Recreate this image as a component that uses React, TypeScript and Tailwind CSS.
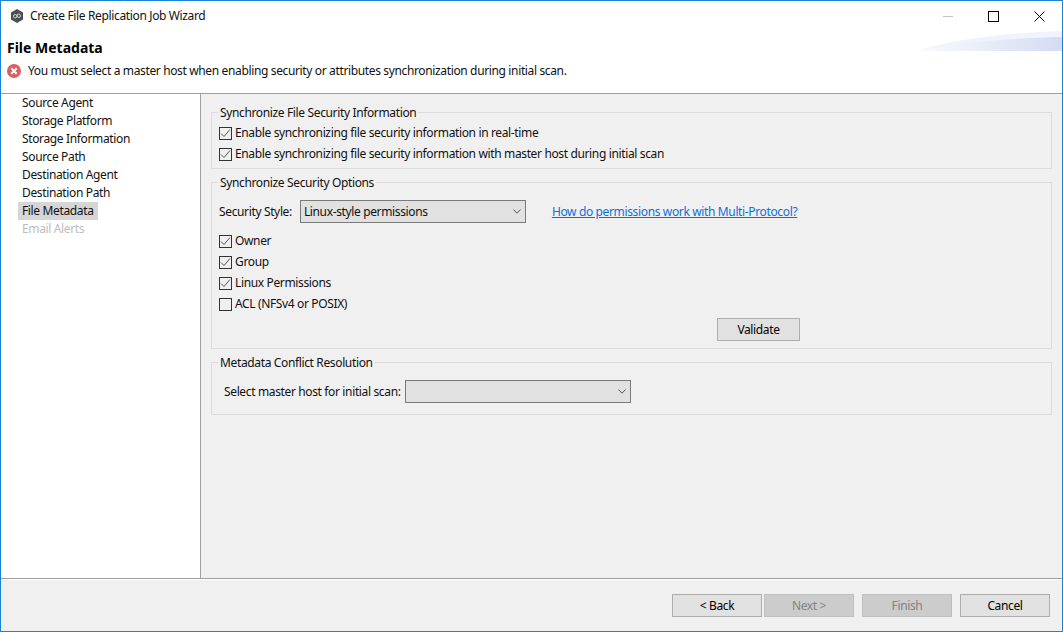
const steps = [
  "Source Agent",
  "Storage Platform",
  "Storage Information",
  "Source Path",
  "Destination Agent",
  "Destination Path",
];

function Check({ label, checked = true }: { label: string; checked?: boolean }) {
  return (
    <label className="flex h-4.5 items-center gap-0.75">
      <span className="flex size-3.25 shrink-0 items-center justify-center border border-[#333] bg-[#f0f0f0]">
        {checked && (
          <svg viewBox="0 0 11 11" className="size-2.75" fill="none" stroke="#555" strokeWidth="1">
            <path d="M1 5.5 L4 8.5 L10 1.5" />
          </svg>
        )}
      </span>
      <span>{label}</span>
    </label>
  );
}

function Group({ title, children, className }: { title: string; children: React.ReactNode; className?: string }) {
  return (
    <fieldset className={`border border-[#dcdcdc] pl-1.5 pr-2 ${className}`}>
      <legend className="px-0.5 pt-0.5 leading-4.5">{title}</legend>
      <div className="ml-px">{children}</div>
    </fieldset>
  );
}

function Select({ value, className }: { value?: string; className?: string }) {
  return (
    <div className={`flex h-5.75 items-center justify-between border border-[#7a7a7a] bg-[#e1e1e1] pl-0.75 pr-1 ${className}`}>
      <span>{value}</span>
      <svg viewBox="0 0 8 5" className="h-1.25 w-2" fill="none" stroke="#555" strokeWidth="1">
        <path d="M0.4 0.5 L4 4.2 L7.6 0.5" />
      </svg>
    </div>
  );
}

function WizardButton({ label, disabled = false, className }: { label: string; disabled?: boolean; className?: string }) {
  return (
    <button
      className={`flex h-5.75 items-center justify-center border ${
        disabled ? "border-[#bfbfbf] bg-[#cccccc] text-[#838383]" : "border-[#adadad] bg-[#e1e1e1] text-black"
      } ${className}`}
    >
      {label}
    </button>
  );
}

export default function App() {
  return (
    <div
      className="flex h-screen flex-col border border-[#1883d7] bg-[#f0f0f0] text-xs tracking-[-0.03em] text-[#111]"
      style={{ fontFamily: '"Noto Sans", "Liberation Sans", sans-serif' }}
    >
      <header className="relative flex h-23.25 shrink-0 flex-col border-b border-[#a0a0a0] bg-white">
        <div className="flex h-7.5 items-center pl-2.25">
          <svg viewBox="0 0 14 14" className="size-3.5">
            <path d="M7 0 L13 3.5 V10.5 L7 14 L1 10.5 V3.5 Z" fill="#4a4f55" />
            <circle cx="5.2" cy="7.2" r="1.7" fill="none" stroke="#d8d8d8" strokeWidth="1" />
            <circle cx="8.8" cy="6.8" r="1.7" fill="none" stroke="#d8d8d8" strokeWidth="1" />
          </svg>
          <span className="ml-1.5">Create File Replication Job Wizard</span>
          <div className="ml-auto flex items-center">
            <svg viewBox="0 0 46 11" className="h-2.75 w-11.5" fill="none">
              <path d="M1 5.5 H11" stroke="#c4c4c4" />
            </svg>
            <svg viewBox="0 0 11 11" className="size-2.75" fill="none">
              <rect x="0.5" y="0.5" width="10" height="10" stroke="#000" />
            </svg>
            <svg viewBox="0 0 11 11" className="ml-8.75 mr-4.25 size-2.75" fill="none">
              <path d="M0.5 0.5 L10.5 10.5 M10.5 0.5 L0.5 10.5" stroke="#000" />
            </svg>
          </div>
        </div>
        <svg viewBox="0 0 142 20" className="absolute right-0 top-7.5 h-5 w-35.5">
          <defs>
            <linearGradient id="swoosh" x1="0" x2="1" y1="0" y2="0">
              <stop offset="0" stopColor="#fafbfe" />
              <stop offset="1" stopColor="#d3dcf5" />
            </linearGradient>
          </defs>
          <path d="M0 20 C30 8 90 2 142 0 V20 Z" fill="#f0f3fb" />
          <path d="M0 20 C30 12 90 7 142 6 V20 Z" fill="url(#swoosh)" />
        </svg>
        <h1 className="relative mt-2 pl-1.5 text-sm font-bold leading-4.5 tracking-normal text-black">File Metadata</h1>
        <div className="mt-1.5 flex items-center pl-1.5">
          <svg viewBox="0 0 14 14" className="size-3.5 shrink-0">
            <circle cx="7" cy="7" r="7" fill="#d9605f" />
            <path d="M4.3 4.3 L9.7 9.7 M9.7 4.3 L4.3 9.7" stroke="#fff" strokeWidth="2" />
          </svg>
          <span className="ml-1.75">You must select a master host when enabling security or attributes synchronization during initial scan.</span>
        </div>
      </header>

      <div className="flex min-h-0 flex-1">
        <nav className="flex w-50 shrink-0 flex-col items-start border-r border-[#a0a0a0] bg-white pl-4.25">
          {steps.map((step) => (
            <div key={step} className="flex h-4.5 items-center px-1">{step}</div>
          ))}
          <div className="flex h-4.5 items-center bg-[#d6d6d6] px-1">File Metadata</div>
          <div className="flex h-4.5 items-center px-1 text-[#bdbdbd]">Email Alerts</div>
        </nav>

        <main className="flex flex-1 flex-col gap-0.75 px-2.5 pt-2">
          <Group title="Synchronize File Security Information" className="h-16.75">
            <div className="flex flex-col gap-0.75 pt-0.5">
              <Check label="Enable synchronizing file security information in real-time" />
              <Check label="Enable synchronizing file security information with master host during initial scan" />
            </div>
          </Group>

          <Group title="Synchronize Security Options" className="h-44.25">
            <div className="flex items-center pt-2">
              <span>Security Style:</span>
              <Select value="Linux-style permissions" className="ml-2 w-56.5" />
              <a className="ml-6.5 text-[#0f6fd8] underline">How do permissions work with Multi-Protocol?</a>
            </div>
            <div className="flex flex-col gap-0.75 pt-2.25">
              <Check label="Owner" />
              <Check label="Group" />
              <Check label="Linux Permissions" />
              <Check label="ACL (NFSv4 or POSIX)" checked={false} />
            </div>
            <div className="mt-1.25 flex justify-end pr-60.75">
              <WizardButton label="Validate" className="w-20.75" />
            </div>
          </Group>

          <Group title="Metadata Conflict Resolution" className="h-15.75">
            <div className="flex items-center pl-1.25 pt-2">
              <span>Select master host for initial scan:</span>
              <Select className="ml-1 w-56.5" />
            </div>
          </Group>
        </main>
      </div>

      <footer className="flex h-13.25 shrink-0 flex-col border-t border-[#a0a0a0]">
        <div className="flex flex-1 items-center justify-end border-t border-white pr-3">
          <WizardButton label="< Back" className="w-22.5" />
          <WizardButton label="Next >" disabled className="ml-0.5 w-22.5" />
          <WizardButton label="Finish" disabled className="ml-2 w-22.5" />
          <WizardButton label="Cancel" className="ml-2 w-22.5" />
        </div>
      </footer>
    </div>
  );
}
